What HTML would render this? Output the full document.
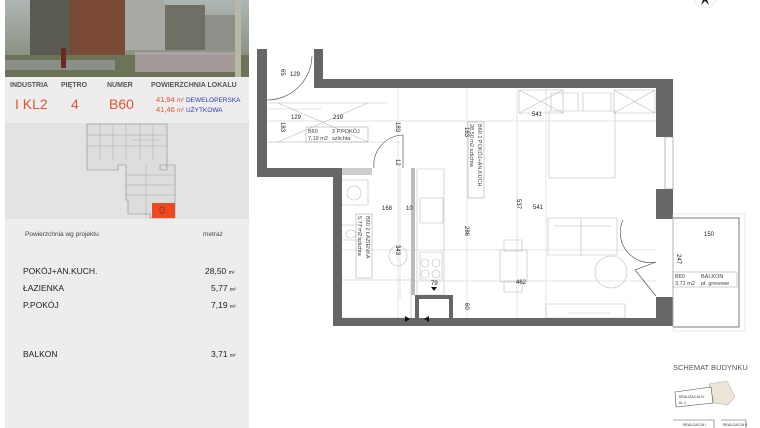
<!DOCTYPE html>
<html><head><meta charset="utf-8"><style>
*{margin:0;padding:0;box-sizing:border-box}
body{width:760px;height:428px;background:#fff;position:relative;overflow:hidden;font-family:"Liberation Sans",sans-serif}
.abs{position:absolute}
#left{left:5px;top:0;width:244px;height:428px;background:#ededed}
.hdr{font-size:7px;font-weight:bold;color:#555;top:82px}
.val{font-size:14px;color:#e8532e;top:96px}
.row{font-size:8.5px;color:#222;left:23px}
</style></head><body>
<div id="left" class="abs"></div>
<svg class="abs" style="left:5px;top:0" width="244" height="77">
<defs><linearGradient id="sk" x1="0" y1="0" x2="0" y2="1"><stop offset="0" stop-color="#aeb6b4"/><stop offset="1" stop-color="#7d8470"/></linearGradient></defs>
<rect width="244" height="77" fill="url(#sk)"/>
<rect x="25" y="0" width="40" height="55" fill="#5b5a52"/>
<rect x="65" y="0" width="55" height="55" fill="#7a4a36"/>
<rect x="120" y="0" width="40" height="50" fill="#a7a9a5"/>
<rect x="160" y="5" width="40" height="45" fill="#6f6f66"/>
<rect x="200" y="15" width="35" height="35" fill="#8d8f88"/>
<rect x="0" y="55" width="244" height="22" fill="#6c7458"/>
<rect x="130" y="52" width="100" height="20" fill="#b9aab4" opacity=".7"/>
<rect x="0" y="60" width="110" height="10" fill="#8c8e8a"/>
<rect x="56" y="48" width="5" height="20" fill="#6b2a22"/>
<rect x="230" y="0" width="6" height="77" fill="#b8b8a8"/>
</svg>
<div class="abs hdr" style="left:10px">INDUSTRIA</div>
<div class="abs hdr" style="left:61px">PIĘTRO</div>
<div class="abs hdr" style="left:107px">NUMER</div>
<div class="abs hdr" style="left:151px">POWIERZCHNIA LOKALU</div>
<div class="abs val" style="left:15px">I KL2</div>
<div class="abs val" style="left:71px">4</div>
<div class="abs val" style="left:109px">B60</div>
<div class="abs" style="left:156px;top:95px;font-size:7.5px;color:#e8532e">41,94 <span style="font-size:6px">m²</span> <span style="color:#2b3bbd;font-size:6.5px">DEWELOPERSKA</span></div>
<div class="abs" style="left:156px;top:105px;font-size:7.5px;color:#e8532e">41,46 <span style="font-size:6px">m²</span> <span style="color:#2b3bbd;font-size:6.5px">UŻYTKOWA</span></div>
<div class="abs" style="left:5px;top:123px;width:244px;height:96px;background:#e3e3e3"></div>
<svg class="abs" style="left:0;top:0" width="250" height="220">
<g fill="#ddd" stroke="#888" stroke-width=".6">
<path d="M87 124H167V170H160V165H175V218H150V214H128V200H126V165H118V170H87Z"/>
</g>
<g stroke="#999" stroke-width=".4" fill="none">
<path d="M87 135H167M87 146H167M100 124V160M113 124V160M126 124V160M140 124V160M153 124V160M126 175H175M126 185H175M126 195H175M146 165V218M132 140H160"/>
</g>
<rect x="152" y="203" width="23" height="15" fill="#ee4a22"/>
<rect x="160" y="207" width="4" height="6" fill="none" stroke="#333" stroke-width=".5"/>
</svg>
<div class="abs" style="left:25px;top:231px;font-size:6.5px;color:#444">Powierzchnia wg projektu</div>
<div class="abs" style="left:203px;top:231px;font-size:6.5px;color:#444">metraż</div>
<div class="abs row" style="top:266px">POKÓJ+AN.KUCH.</div>
<div class="abs row" style="top:283px">ŁAZIENKA</div>
<div class="abs row" style="top:300px">P.POKÓJ</div>
<div class="abs row" style="top:349px">BALKON</div>
<div class="abs" style="left:205px;top:266px;font-size:8.5px;color:#222">28,50 <span style="font-size:5px">m²</span></div>
<div class="abs" style="left:211px;top:283px;font-size:8.5px;color:#222">5,77 <span style="font-size:5px">m²</span></div>
<div class="abs" style="left:211px;top:300px;font-size:8.5px;color:#222">7,19 <span style="font-size:5px">m²</span></div>
<div class="abs" style="left:211px;top:349px;font-size:8.5px;color:#222">3,71 <span style="font-size:5px">m²</span></div>

<svg class="abs" style="left:0;top:0" width="760" height="428" font-family="Liberation Sans,sans-serif">
<circle cx="705" cy="-3" r="11" fill="none" stroke="#ddd" stroke-width=".6"/>
<path d="M701 5L705 -6L709 5L705 1Z" fill="#222"/>
<g stroke="#ccc" stroke-width=".5" fill="none">
<path d="M266 121H656M266 142H400M342 250H656M415 281H656M266 109H322M398 88V325M467 88V325M517 88V325M546 88V325M400 168V300"/>
</g>
<g stroke="#bbb" stroke-width=".6" fill="none">
<path d="M268 103H387M268 142H320M278 103L368 142M278 142L368 103"/>
<path d="M519 90H563V113H519ZM519 90L563 113M519 113L563 90M614 90H655V113H614ZM614 90L655 113M614 113L655 90"/>
<path d="M551 93H578V111H551ZM583 93H611V111H583ZM549 111H615V178H549Z"/>
<path d="M548 218H617V255H548ZM554 226H611M581 218V255"/>
<circle cx="611" cy="272" r="16"/>
<path d="M546 304H625V318H546ZM568 313H610"/>
<path d="M500 250H527V282H500ZM504 240H522V251H504ZM504 281H522V292H504Z"/>
<path d="M417 169H444V295H417ZM420 198H443V223H420ZM420 252H442V280H420Z"/>
<circle cx="425" cy="263" r="4"/><circle cx="436" cy="263" r="4"/><circle cx="425" cy="274" r="4"/><circle cx="436" cy="274" r="4"/>
<path d="M341 180H368V205H341ZM341 225H361V240H341ZM341 280H411V318H341Z"/>
<circle cx="354" cy="193" r="7"/><ellipse cx="351" cy="234" rx="5" ry="4"/><ellipse cx="398" cy="256" rx="9" ry="10"/>
</g>
<g fill="#666">
<rect x="257" y="49" width="10" height="128"/>
<rect x="257" y="168" width="85" height="9"/>
<rect x="333" y="168" width="9" height="158"/>
<rect x="333" y="318" width="340" height="8"/>
<rect x="314" y="49" width="9" height="39"/>
<rect x="314" y="79" width="359" height="9"/>
<rect x="656" y="80" width="17" height="57"/>
<rect x="656" y="189" width="17" height="30"/>
<rect x="656" y="297" width="17" height="29"/>
<rect x="415" y="295" width="38" height="4"/>
<rect x="415" y="295" width="4" height="31"/>
<rect x="449" y="295" width="4" height="31"/>
</g>
<rect x="342" y="168" width="30" height="7" fill="#ccc"/>
<rect x="411" y="168" width="4" height="127" fill="#bbb"/>
<rect x="665" y="137" width="8" height="52" fill="#fff" stroke="#888" stroke-width=".6"/>
<g stroke="#444" stroke-width=".6" fill="none">
<path d="M267 100A45 45 0 0 0 312 56"/>
<path d="M374 168A30 30 0 0 1 403 135V168"/>
<path d="M623 220A30 30 0 0 0 656 262L635 270L656 296"/>
</g>
<rect x="673" y="218" width="66" height="109" fill="#fff" stroke="#444" stroke-width=".7"/>
<rect x="673" y="214" width="72" height="117" fill="none" stroke="#ddd" stroke-width=".6"/>
<g fill="#222" font-size="6">
<text x="290" y="76">129</text><g transform="rotate(90 283 72)"><text x="280" y="74">65</text></g>
<text x="291" y="119">129</text><text x="333" y="119">219</text>
<text x="532" y="116">541</text><text x="533" y="209">541</text>
<text x="516" y="284">462</text><text x="704" y="236">150</text>
<text x="382" y="210">168</text><text x="406" y="210">10</text>
<text x="431" y="285">79</text>
<g transform="rotate(90 283 125)"><text x="280" y="127">183</text></g>
<g transform="rotate(90 398 125)"><text x="395" y="127">183</text></g>
<g transform="rotate(90 467 131)"><text x="463" y="133">183</text></g>
<g transform="rotate(90 398 162)"><text x="395" y="164">12</text></g>
<g transform="rotate(90 398 248)"><text x="395" y="250">343</text></g>
<g transform="rotate(90 467 230)"><text x="463" y="232">286</text></g>
<g transform="rotate(90 519 203)"><text x="515" y="205">537</text></g>
<g transform="rotate(90 467 306)"><text x="464" y="308">60</text></g>
<g transform="rotate(90 679 258)"><text x="675" y="260">247</text></g>
</g>
<g font-size="5.5" fill="#444">
<rect x="306" y="127" width="62" height="15" fill="none" stroke="#999" stroke-width=".5"/>
<text x="308" y="133">B60</text><text x="332" y="133">3 P.POKÓJ</text><text x="308" y="140">7,19 m2</text><text x="332" y="140">szlichta</text>
<rect x="673" y="272" width="64" height="15" fill="none" stroke="#999" stroke-width=".5"/>
<text x="675" y="278">B60</text><text x="701" y="278">BALKON</text><text x="675" y="285">3,71 m2</text><text x="701" y="285">pł. gresowe</text>
<g transform="rotate(90 476 160)"><rect x="438" y="152" width="76" height="16" fill="none" stroke="#999" stroke-width=".5"/><text x="440" y="158">B60    1 POKÓJ+AN.KUCH.</text><text x="440" y="166">28,50 m2  szlichta</text></g>
<g transform="rotate(90 364 245)"><rect x="333" y="237" width="64" height="16" fill="none" stroke="#999" stroke-width=".5"/><text x="335" y="243">B60    2 ŁAZIENKA</text><text x="335" y="251">5,77 m2  szlichta</text></g>
</g>
<g fill="#111"><path d="M410 319l-5-3v6zM424 319l5-3v6zM434 291l-3-4h6z"/></g>
<text x="673" y="370" font-size="7.5" fill="#555">SCHEMAT BUDYNKU</text>
<path d="M709 384L727 381L735 397L728 405L714 403Z" fill="#ece5d8" stroke="#aaa" stroke-width=".5"/>
<path d="M675 392L711 387L713 403L676 407Z" fill="#fff" stroke="#555" stroke-width=".6"/>
<text x="679" y="398" font-size="3.5" fill="#333">REALIZACJA IV</text><text x="679" y="404" font-size="3.5" fill="#333">KL.1</text>
<path d="M673 420H714V428M721 420H746V428" fill="none" stroke="#555" stroke-width=".6"/>
<text x="683" y="426" font-size="3.5" fill="#333">REALIZACJA I</text><text x="723" y="426" font-size="3.5" fill="#333">REALIZACJA II</text>
</svg>
</body></html>
